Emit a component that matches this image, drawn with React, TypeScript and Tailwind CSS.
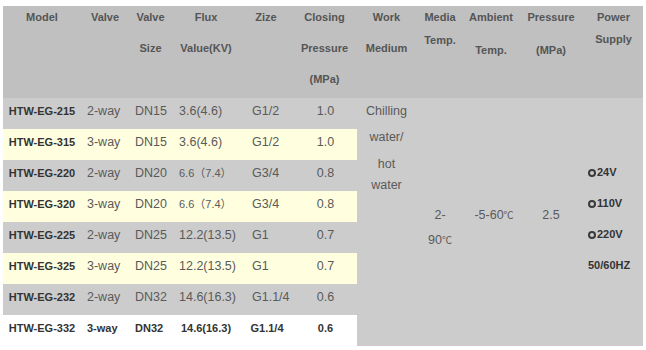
import React from 'react';

type Row = {
    model: string;
    valve: string;
    size: string;
    flux: string;
    zize: string;
    closing: string;
    tone: 'gray' | 'yellow' | 'white';
    smallFlux?: boolean;
};

const rows: Row[] = [
    { model: 'HTW-EG-215', valve: '2-way', size: 'DN15', flux: '3.6(4.6)', zize: 'G1/2', closing: '1.0', tone: 'gray' },
    { model: 'HTW-EG-315', valve: '3-way', size: 'DN15', flux: '3.6(4.6)', zize: 'G1/2', closing: '1.0', tone: 'yellow' },
    { model: 'HTW-EG-220', valve: '2-way', size: 'DN20', flux: '6.6（7.4）', zize: 'G3/4', closing: '0.8', tone: 'gray', smallFlux: true },
    { model: 'HTW-EG-320', valve: '3-way', size: 'DN20', flux: '6.6（7.4）', zize: 'G3/4', closing: '0.8', tone: 'yellow', smallFlux: true },
    { model: 'HTW-EG-225', valve: '2-way', size: 'DN25', flux: '12.2(13.5)', zize: 'G1', closing: '0.7', tone: 'gray' },
    { model: 'HTW-EG-325', valve: '3-way', size: 'DN25', flux: '12.2(13.5)', zize: 'G1', closing: '0.7', tone: 'yellow' },
    { model: 'HTW-EG-232', valve: '2-way', size: 'DN32', flux: '14.6(16.3)', zize: 'G1.1/4', closing: '0.6', tone: 'gray' },
    { model: 'HTW-EG-332', valve: '3-way', size: 'DN32', flux: '14.6(16.3)', zize: 'G1.1/4', closing: '0.6', tone: 'white' },
];

const headers: { lines: string[]; gap: string }[] = [
    { lines: ['Model'], gap: 'gap-[9px]' },
    { lines: ['Valve'], gap: 'gap-[9px]' },
    { lines: ['Valve', 'Size'], gap: 'gap-[9px]' },
    { lines: ['Flux', 'Value(KV)'], gap: 'gap-[9px]' },
    { lines: ['Zize'], gap: 'gap-[9px]' },
    { lines: ['Closing', 'Pressure', '(MPa)'], gap: 'gap-[9px]' },
    { lines: ['Work', 'Medium'], gap: 'gap-[9px]' },
    { lines: ['Media', 'Temp.'], gap: 'gap-[1px]' },
    { lines: ['Ambient', 'Temp.'], gap: 'gap-[11px]' },
    { lines: ['Pressure', '(MPa)'], gap: 'gap-[11px]' },
    { lines: ['Power', 'Supply'], gap: 'gap-[0px]' },
];

const toneBg = {
    gray: 'bg-[#cccccc]',
    yellow: 'bg-[#ffffe0]',
    white: 'bg-white',
};

function Volt({ label }: { label: string }) {
    return (
        <div className="flex items-center h-[31px] leading-[31px]">
            <span className="inline-block shrink-0 w-[8px] h-[8px] rounded-full border-[2.5px] border-[#3a3a3a] mr-[1px]" />
            {label}
        </div>
    );
}

export default function App() {
    return (
        <div
            className="w-[646px] h-[350px] bg-white pt-[6px] pl-[3px] overflow-hidden"
            style={{ fontFamily: '"Liberation Sans", Arial, "Noto Sans CJK SC", sans-serif' }}
        >
            <div className="grid grid-cols-[78px_48px_43px_68px_52px_65px_59px_48px_54px_66px_59px] grid-rows-[92px_repeat(8,31px)] w-[640px]">
                {headers.map((h, i) => (
                    <div
                        key={i}
                        className={`bg-[#c0c0c0] flex flex-col items-center ${h.gap} text-[11px] font-bold leading-[22px] text-[#555]`}
                    >
                        {h.lines.map((l, j) => (
                            <span key={j}>{l}</span>
                        ))}
                    </div>
                ))}

                {rows.map((r, i) => {
                    const bold = r.tone === 'white';
                    const bg = toneBg[r.tone];
                    const body = bold
                        ? 'text-[11px] font-bold text-[#333]'
                        : 'text-[12.5px] text-[#5a5a5a]';
                    return (
                        <React.Fragment key={r.model}>
                            <div className={`${bg} pt-[2px] leading-[22px] text-center text-[11px] font-bold text-[#333]`}>
                                {r.model}
                            </div>
                            <div className={`${bg} ${body} pt-[2px] leading-[22px] pl-[6px]`}>{r.valve}</div>
                            <div className={`${bg} ${body} pt-[2px] leading-[22px] pl-[6px]`}>{r.size}</div>
                            <div
                                className={`${bg} pt-[2px] leading-[22px] ${
                                    bold ? `${body} text-center` : r.smallFlux ? 'text-[11px] text-[#5a5a5a] pl-[7px]' : `${body} pl-[7px]`
                                }`}
                            >
                                {r.flux}
                            </div>
                            <div className={`${bg} ${body} pt-[2px] leading-[22px] ${bold ? 'text-center pl-[2px]' : 'pl-[12px]'}`}>
                                {r.zize}
                            </div>
                            <div className={`${bg} ${body} pt-[2px] leading-[22px] text-center pl-[2px]`}>{r.closing}</div>

                            {i === 0 && (
                                <>
                                    <div className="row-span-8 bg-[#cccccc] text-[12.5px] text-[#5a5a5a] text-center">
                                        <div className="leading-[26px]">
                                            Chilling
                                            <br />
                                            water/
                                        </div>
                                        <div className="leading-[21px] mt-[4px]">
                                            hot
                                            <br />
                                            water
                                        </div>
                                    </div>
                                    <div className="row-span-8 bg-[#cccccc] text-[12.5px] text-[#5a5a5a] text-center pt-[105px] leading-[25px]">
                                        2-
                                        <br />
                                        90<span className="text-[10px]">℃</span>
                                    </div>
                                    <div className="row-span-8 bg-[#cccccc] text-[12.5px] text-[#5a5a5a] text-center pt-[105px] leading-[25px] pl-[6px]">
                                        -5-60<span className="text-[10px]">℃</span>
                                    </div>
                                    <div className="row-span-8 bg-[#cccccc] text-[12.5px] text-[#5a5a5a] text-center pt-[105px] leading-[25px]">
                                        2.5
                                    </div>
                                    <div className="row-span-8 bg-[#cccccc] text-[11px] font-bold text-[#333] pt-[59px] pl-[4px]">
                                        <Volt label="24V" />
                                        <Volt label="110V" />
                                        <Volt label="220V" />
                                        <div className="h-[31px] leading-[31px]">50/60HZ</div>
                                    </div>
                                </>
                            )}
                        </React.Fragment>
                    );
                })}
            </div>
        </div>
    );
}
